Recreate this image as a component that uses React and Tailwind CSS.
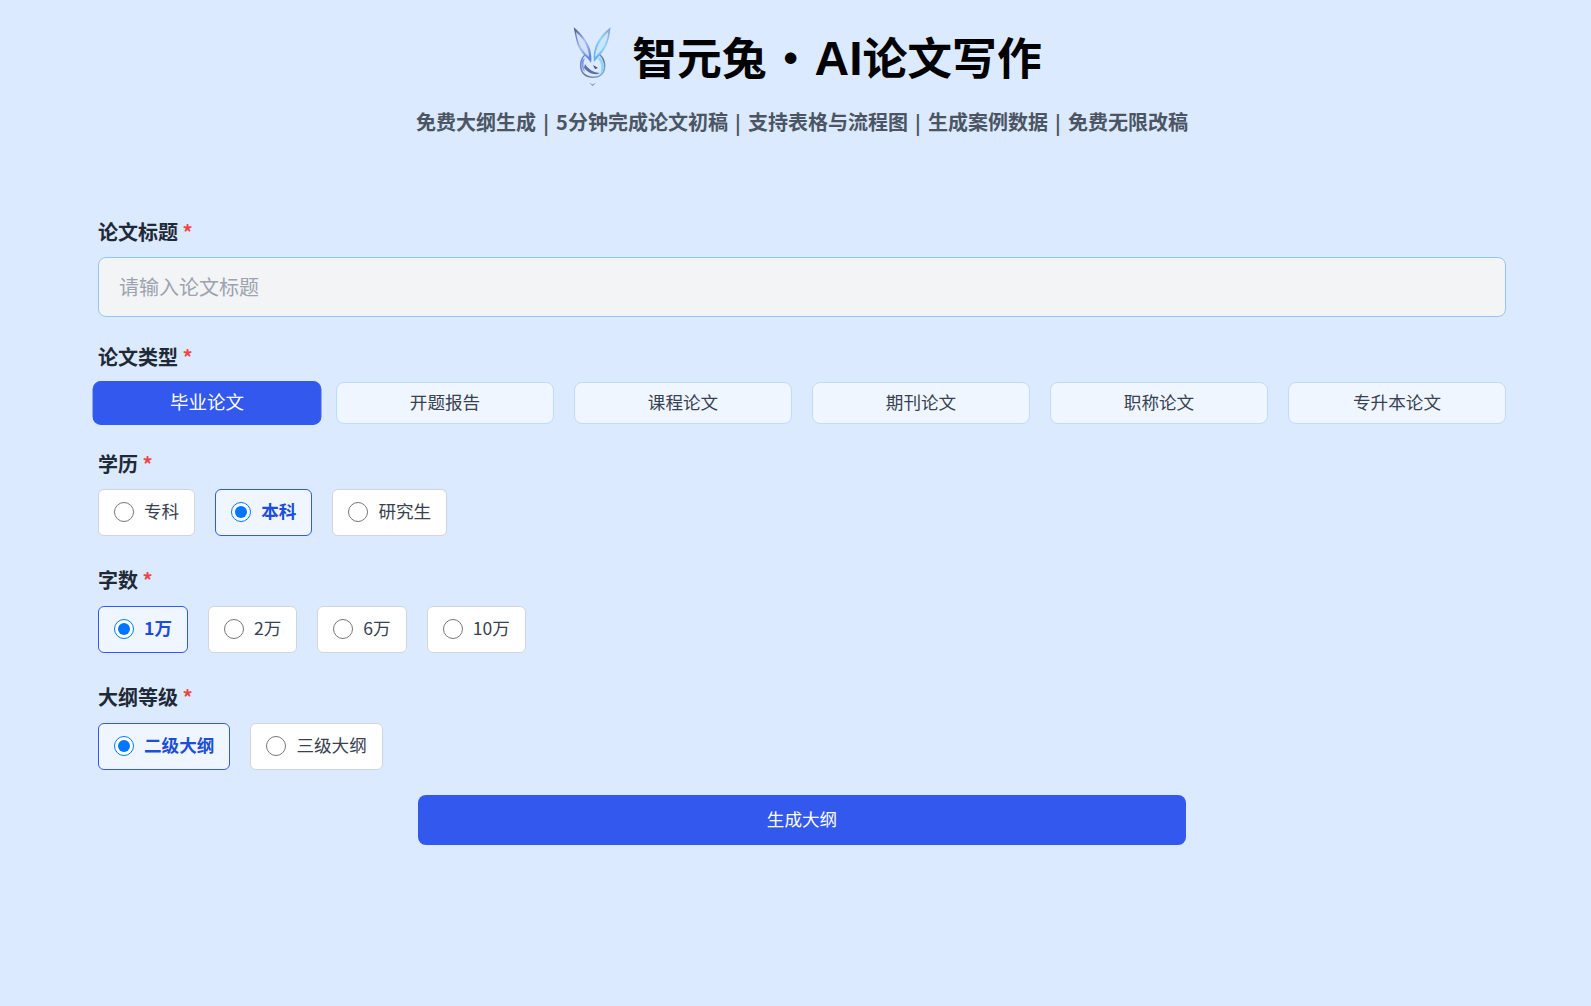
const font = { fontFamily: '"Noto Sans CJK SC", sans-serif' };

function Logo() {
  return (
    <svg width="38" height="60" viewBox="0 0 38 60" className="shrink-0">
      <defs>
        <linearGradient id="earL" x1="0" y1="0" x2="0.7" y2="1">
          <stop offset="0" stopColor="#46508f" />
          <stop offset="0.55" stopColor="#a9c0f2" />
          <stop offset="1" stopColor="#5f86dc" />
        </linearGradient>
        <linearGradient id="earR" x1="1" y1="0" x2="0.2" y2="1">
          <stop offset="0" stopColor="#8aa0d4" />
          <stop offset="0.5" stopColor="#93d3fb" />
          <stop offset="1" stopColor="#63b0f5" />
        </linearGradient>
        <linearGradient id="ring" x1="0" y1="0" x2="1" y2="1">
          <stop offset="0" stopColor="#6f8fe0" />
          <stop offset="0.6" stopColor="#6d7596" />
          <stop offset="1" stopColor="#7cc4f7" />
        </linearGradient>
      </defs>
      <path d="M0.7 0.3C2 7 3 13 5 19C7 24 10 27 13 30C15 32 17 34 18 36C19 31 18 26 17 22C15 15 8 6 0.7 0.3Z" fill="url(#earL)" />
      <path d="M3 5C4 11 6 18 9 22C11 25 14 28 16 30C16 25 14 19 11 14C9 11 6 8 3 5Z" fill="#d3e2fb" />
      <path d="M37.5 0.3C30 6 25 13 23 18C21 23 20 29 21 35C24 31 28 28 31 23C35 17 37 8 37.5 0.3Z" fill="url(#earR)" />
      <path d="M35 5C30 10 26 15 24 21C23 24 22 27 22 30C26 26 30 22 32 17C34 13 35 9 35 5Z" fill="#c8e6fd" />
      <path d="M12 28C7 32 6.5 41 10 46C14 51 24 52 29 47C33 42 32.5 33 27 28" fill="none" stroke="url(#ring)" strokeWidth="1.6" />
      <path d="M9 33C8 38 9 43 12 45C10 40 10 36 12 31Z" fill="#7d9ae6" />
      <path d="M12 37C15 42 21 46 27 46C22 49 15 46 11 41Z" fill="#5c6fa8" />
      <path d="M20 38L25 41L22 42Z" fill="#3f4a78" />
      <path d="M27 30C32 36 32 43 27 48C29 42 29 36 25 32Z" fill="#8fd3fb" />
      <path d="M16.3 55.7L19.7 57.4L23 55.7L19.7 59Z" fill="#7a86a8" />
    </svg>
  );
}

function Label({ children }) {
  return (
    <div className="text-[20px] leading-[30px] font-bold text-[#1f2937]">
      {children} <span className="text-[#ef4444]">*</span>
    </div>
  );
}

function RadioGroup({ name, options, checked }) {
  return (
    <div className="flex gap-5 mt-[10px]">
      {options.map((o) => (
        <label
          key={o}
          className={
            o === checked
              ? "flex items-center h-[47px] pb-[2px] px-[15px] gap-[10px] rounded-md border border-[#3358ee] bg-[#eff6ff] text-[17.6px] font-bold text-[#1d4ed8]"
              : "flex items-center h-[47px] pb-[2px] px-[15px] gap-[10px] rounded-md border border-[#d1d5db] bg-white text-[17.6px] text-[#374151]"
          }
        >
          <input type="radio" name={name} defaultChecked={o === checked} className="w-5 h-5 m-0" />
          <span>{o}</span>
        </label>
      ))}
    </div>
  );
}

function Sep() {
  return <span className="inline-block w-5 text-center text-[24px] leading-[20px] align-[-1px] font-normal font-['Liberation_Sans']">|</span>;
}

const types = ["毕业论文", "开题报告", "课程论文", "期刊论文", "职称论文", "专升本论文"];

export default function App() {
  return (
    <div style={font} className="min-h-[1006px] bg-[#dbeafe] pl-[98px] pr-[85px] pt-[26px]">
      <header className="flex flex-col items-center">
        <div className="flex items-center gap-[21px] h-[62px] pl-[11px]">
          <Logo />
          <h1 className="text-[44.8px] leading-[62px] pt-[1px] font-bold text-black">
            智元兔<span className="mx-[1.5px]">・</span><span className="text-[48px] font-['Liberation_Sans']">AI</span>论文写作
          </h1>
        </div>
        <p className="mt-[19px] text-[20px] leading-[30px] font-bold text-[#4b5563]">
          免费大纲生成<Sep />5分钟完成论文初稿<Sep />支持表格与流程图<Sep />生成案例数据<Sep />免费无限改稿
        </p>
      </header>

      <form className="mt-[80px]">
        <Label>论文标题</Label>
        <input
          placeholder="请输入论文标题"
          className="mt-[10px] block w-full h-[60px] px-5 pb-[2px] rounded-lg border border-[#93c5fd] bg-[#f3f4f6] text-[20px] placeholder:text-[#9ca3af] outline-none"
        />

        <div className="mt-[25px] pb-[1px]">
          <Label>论文类型</Label>
        </div>
        <div className="grid grid-cols-6 gap-5 mt-[9px]">
          {types.map((t, i) => (
            <button
              key={t}
              type="button"
              className={
                i === 0
                  ? "h-[42px] pb-[2px] rounded-lg border border-[#3358ee] bg-[#3358ee] text-[17.6px] text-white scale-105"
                  : "h-[42px] pb-[2px] rounded-lg border border-[#bfdbfe] bg-[#eff6ff] text-[17.6px] text-[#374151]"
              }
            >
              {t}
            </button>
          ))}
        </div>

        <div className="mt-[25px]">
          <Label>学历</Label>
        </div>
        <RadioGroup name="edu" options={["专科", "本科", "研究生"]} checked="本科" />

        <div className="mt-[29px] pb-[1px]">
          <Label>字数</Label>
        </div>
        <RadioGroup name="words" options={["1万", "2万", "6万", "10万"]} checked="1万" />

        <div className="mt-[29px] pb-[1px]">
          <Label>大纲等级</Label>
        </div>
        <RadioGroup name="level" options={["二级大纲", "三级大纲"]} checked="二级大纲" />

        <div className="flex justify-center mt-[25px]">
          <button type="button" className="w-[768px] h-[50px] pb-[2px] rounded-lg bg-[#3358ee] text-[17.6px] text-white">
            生成大纲
          </button>
        </div>
      </form>
    </div>
  );
}
